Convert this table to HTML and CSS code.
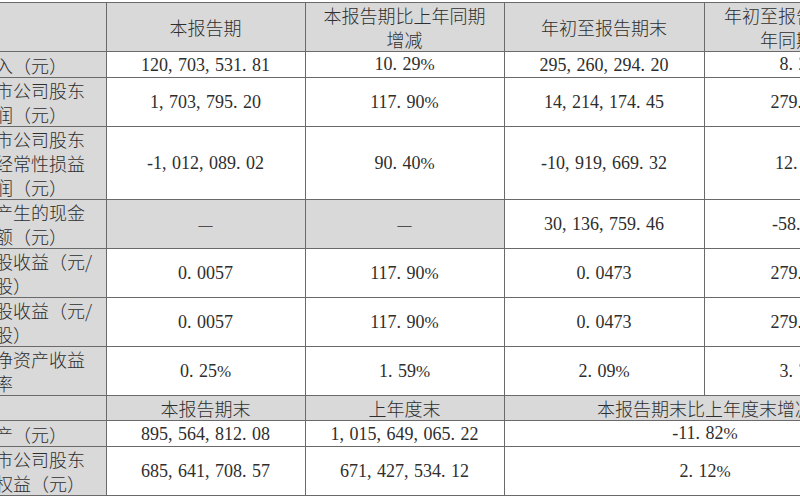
FILE: index.html
```html
<!DOCTYPE html>
<html lang="zh-CN">
<head>
<meta charset="utf-8">
<title>主要会计数据和财务指标</title>
<link rel="stylesheet" href="styles.css">
</head>
<body>
<table class="fin">
  <colgroup>
    <col class="c-label">
    <col class="c1">
    <col class="c2">
    <col class="c3">
    <col class="c4">
  </colgroup>
  <tr class="head">
    <td class="label"></td>
    <td>本报告期</td>
    <td>本报告期比上年同期增减</td>
    <td>年初至报告期末</td>
    <td>年初至报告期末比上年同期增减</td>
  </tr>
  <tr>
    <td class="label"><div class="lab">入（元）</div></td>
    <td class="num">120<span class="s">,</span>703<span class="s">,</span>531<span class="s">.</span>81</td>
    <td class="num">10<span class="s">.</span>29<span class="pc">%</span></td>
    <td class="num">295<span class="s">,</span>260<span class="s">,</span>294<span class="s">.</span>20</td>
    <td class="num">8<span class="s">.</span>26<span class="pc">%</span></td>
  </tr>
  <tr>
    <td class="label"><div class="lab">市公司股东<br>润（元）</div></td>
    <td class="num">1<span class="s">,</span>703<span class="s">,</span>795<span class="s">.</span>20</td>
    <td class="num">117<span class="s">.</span>90<span class="pc">%</span></td>
    <td class="num">14<span class="s">,</span>214<span class="s">,</span>174<span class="s">.</span>45</td>
    <td class="num">279<span class="s">.</span>82<span class="pc">%</span></td>
  </tr>
  <tr>
    <td class="label"><div class="lab">市公司股东<br>经常性损益<br>润（元）</div></td>
    <td class="num">-1<span class="s">,</span>012<span class="s">,</span>089<span class="s">.</span>02</td>
    <td class="num">90<span class="s">.</span>40<span class="pc">%</span></td>
    <td class="num">-10<span class="s">,</span>919<span class="s">,</span>669<span class="s">.</span>32</td>
    <td class="num">12<span class="s">.</span>58<span class="pc">%</span></td>
  </tr>
  <tr>
    <td class="label"><div class="lab">产生的现金<br>额（元）</div></td>
    <td class="shade dash">—</td>
    <td class="shade dash">—</td>
    <td class="num">30<span class="s">,</span>136<span class="s">,</span>759<span class="s">.</span>46</td>
    <td class="num">-58<span class="s">.</span>96<span class="pc">%</span></td>
  </tr>
  <tr>
    <td class="label"><div class="lab">股收益（元/<br>股）</div></td>
    <td class="num">0<span class="s">.</span>0057</td>
    <td class="num">117<span class="s">.</span>90<span class="pc">%</span></td>
    <td class="num">0<span class="s">.</span>0473</td>
    <td class="num">279<span class="s">.</span>82<span class="pc">%</span></td>
  </tr>
  <tr>
    <td class="label"><div class="lab">股收益（元/<br>股）</div></td>
    <td class="num">0<span class="s">.</span>0057</td>
    <td class="num">117<span class="s">.</span>90<span class="pc">%</span></td>
    <td class="num">0<span class="s">.</span>0473</td>
    <td class="num">279<span class="s">.</span>82<span class="pc">%</span></td>
  </tr>
  <tr>
    <td class="label"><div class="lab">净资产收益<br>率</div></td>
    <td class="num">0<span class="s">.</span>25<span class="pc">%</span></td>
    <td class="num">1<span class="s">.</span>59<span class="pc">%</span></td>
    <td class="num">2<span class="s">.</span>09<span class="pc">%</span></td>
    <td class="num">3<span class="s">.</span>76<span class="pc">%</span></td>
  </tr>
  <tr class="head">
    <td class="label"></td>
    <td>本报告期末</td>
    <td>上年度末</td>
    <td colspan="2">本报告期末比上年度末增减</td>
  </tr>
  <tr>
    <td class="label"><div class="lab">产（元）</div></td>
    <td class="num">895<span class="s">,</span>564<span class="s">,</span>812<span class="s">.</span>08</td>
    <td class="num">1<span class="s">,</span>015<span class="s">,</span>649<span class="s">,</span>065<span class="s">.</span>22</td>
    <td class="num" colspan="2">-11<span class="s">.</span>82<span class="pc">%</span></td>
  </tr>
  <tr>
    <td class="label"><div class="lab">市公司股东<br>权益（元）</div></td>
    <td class="num">685<span class="s">,</span>641<span class="s">,</span>708<span class="s">.</span>57</td>
    <td class="num">671<span class="s">,</span>427<span class="s">,</span>534<span class="s">.</span>12</td>
    <td class="num" colspan="2">2<span class="s">.</span>12<span class="pc">%</span></td>
  </tr>
</table>
</body>
</html>
```
FILE: styles.css
```css
html, body {
  margin: 0;
  padding: 0;
  background: #ffffff;
  overflow: hidden;
}

body {
  width: 800px;
  height: 500px;
  padding-top: 2px;
  box-sizing: border-box;
  color: #2e2e2e;
  font-family: "Noto Sans CJK SC", "Noto Sans", sans-serif;
  font-weight: 300;
}

.fin {
  border-collapse: collapse;
  table-layout: fixed;
  width: 906px;
  font-size: 18px;
  line-height: 24px;
}

.c-label { width: 106px; }
.c1 { width: 199px; }
.c2 { width: 199px; }
.c3 { width: 200px; }
.c4 { width: 202px; }

.fin td {
  border: 1px solid #6a6a6a;
  padding: 0 12px;
  text-align: center;
  vertical-align: middle;
}

.fin .head td {
  background: #d9d9d9;
}

.fin td.label {
  background: #d9d9d9;
  border-left: none;
  padding: 0;
  text-align: left;
  overflow: hidden;
  white-space: nowrap;
}

.lab {
  margin-left: -5px;
}

.fin td.shade {
  background: #d9d9d9;
}

.num {
  font-family: "Liberation Serif", "Noto Sans CJK SC", serif;
  font-weight: 400;
  white-space: nowrap;
}

.s {
  letter-spacing: 5.5px;
}

.pc {
  font-size: 17px;
}

.dash {
  font-family: "Noto Sans CJK SC", sans-serif;
}
```
